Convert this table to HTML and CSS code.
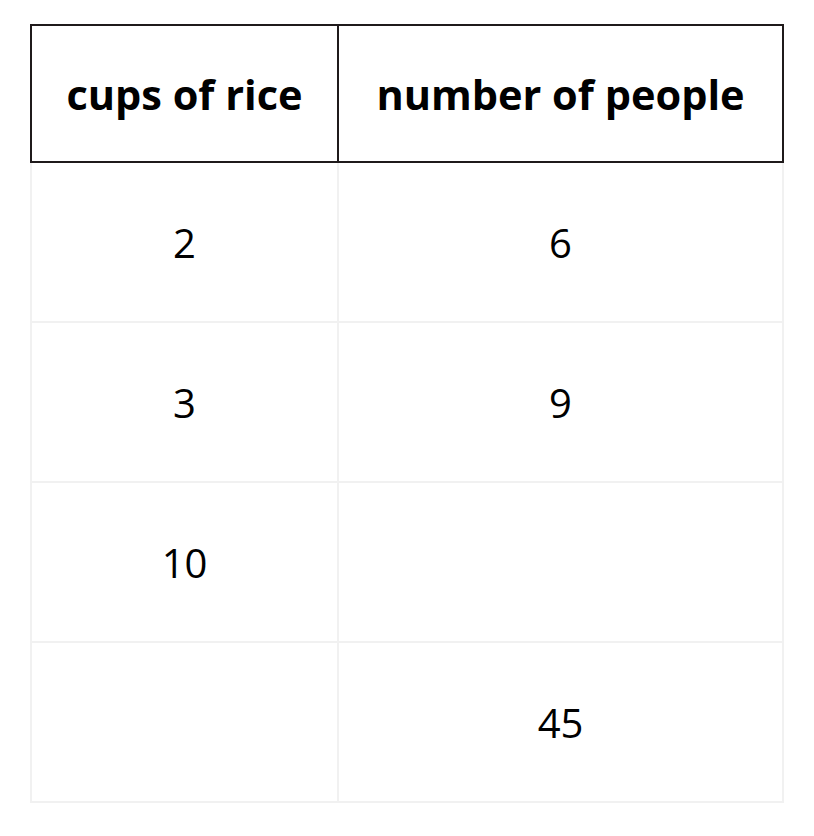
FILE: index.html
```html
<!DOCTYPE html>
<html>
<head>
<meta charset="utf-8">
<link rel="stylesheet" href="styles.css">
</head>
<body>
<table class="ratio">
  <colgroup><col class="c1"><col class="c2"></colgroup>
  <thead>
    <tr><th>cups of rice</th><th>number of people</th></tr>
  </thead>
  <tbody>
    <tr><td>2</td><td>6</td></tr>
    <tr><td>3</td><td>9</td></tr>
    <tr><td>10</td><td></td></tr>
    <tr><td></td><td>45</td></tr>
  </tbody>
</table>
</body>
</html>
```
FILE: styles.css
```css
html, body {
  margin: 0;
  padding: 0;
  background: #ffffff;
}
body {
  padding: 24px 0 0 30px;
  font-family: "Open Sans", "Noto Sans", sans-serif;
  color: #000;
}
.ratio {
  border-collapse: collapse;
  table-layout: fixed;
  width: 752px;
}
.c1 { width: 307px; }
.c2 { width: 445px; }
.ratio th {
  height: 135px;
  border: 2px solid #1f1a1b;
  font-size: 41.5px;
  font-weight: 700;
  letter-spacing: 0;
  text-align: center;
  vertical-align: middle;
  padding: 0;
}
.ratio td {
  height: 158px;
  border: 2px solid #f1f1f1;
  font-size: 40px;
  font-weight: 400;
  text-align: center;
  vertical-align: middle;
  padding: 0;
}
```
